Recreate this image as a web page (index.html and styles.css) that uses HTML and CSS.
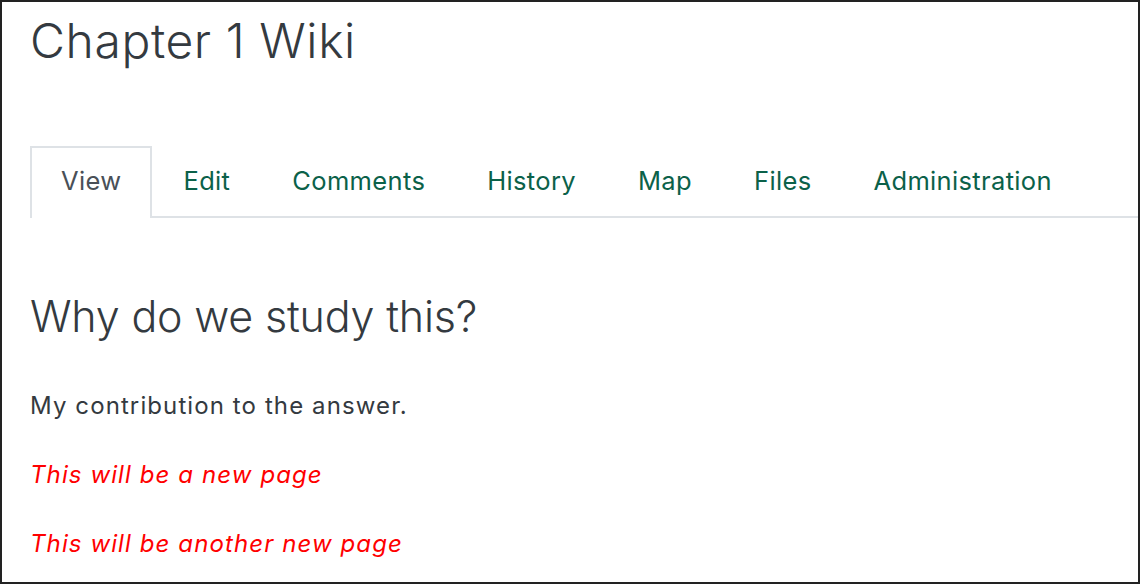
FILE: index.html
```html
<html>
  <head>
    <meta charset="utf-8">
    <title>Chapter 1 Wiki</title>
    <link rel="stylesheet" href="styles.css">
  </head>
  <body>
    <div class="page">
      <h2 class="title">Chapter 1 Wiki</h2>

      <ul class="tabs">
        <li class="tab active"><a href="#">View</a></li>
        <li class="tab"><a href="#">Edit</a></li>
        <li class="tab"><a href="#">Comments</a></li>
        <li class="tab"><a href="#">History</a></li>
        <li class="tab"><a href="#">Map</a></li>
        <li class="tab"><a href="#">Files</a></li>
        <li class="tab"><a href="#">Administration</a></li>
      </ul>

      <div class="wiki-content">
        <h3 class="section">Why do we study this?</h3>
        <p>My contribution to the answer.</p>
        <p class="newpage">This will be a new page</p>
        <p class="newpage">This will be another new page</p>
      </div>
    </div>
  </body>
</html>
```

FILE: styles.css
```css
html, body {
  margin: 0;
  height: 100%;
}

body {
  font-family: Inter, "Noto Sans", sans-serif;
  color: #343a40;
  background: #fff;
}

.page {
  box-sizing: border-box;
  height: 584px;
  border: 2px solid #222;
  padding: 0 0 0 28px;
  overflow: hidden;
}

.title {
  margin: 10px 0 0 0;
  font-size: 48px;
  font-weight: 300;
  line-height: 1.2;
  letter-spacing: 0.6px;
}

.tabs {
  display: flex;
  list-style: none;
  margin: 76px 0 0 0;
  padding: 0;
  border-bottom: 2px solid #dee2e6;
}

.tab {
  margin-bottom: -2px;
}

.tab a {
  display: block;
  padding: 18px 29px 20px 29px;
  font-size: 25.5px;
  line-height: 30px;
  letter-spacing: 0.35px;
  color: #0b6149;
  text-decoration: none;
  border: 2px solid transparent;
  border-bottom: none;
}

.tab.active a {
  color: #495057;
  border-color: #dee2e6;
  background: #fff;
  padding-bottom: 22px;
}

.wiki-content {
  padding-top: 73px;
}

.section {
  margin: 0 0 46px 0;
  font-size: 43px;
  font-weight: 300;
  line-height: 1.2;
  letter-spacing: -0.2px;
}

.wiki-content p {
  margin: 0 0 33px 0;
  font-size: 24px;
  line-height: 36px;
  letter-spacing: 1.1px;
}

.wiki-content p.newpage {
  color: #f00;
  font-style: italic;
}
```
